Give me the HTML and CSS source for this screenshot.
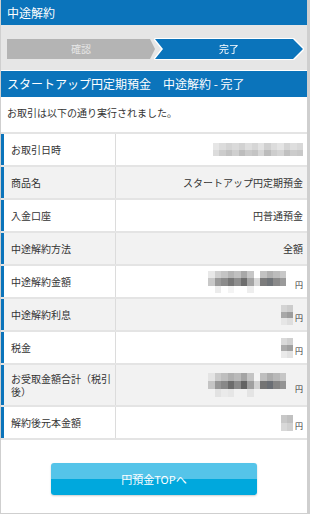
FILE: index.html
```html
<!DOCTYPE html>
<html lang="ja">
<head>
<meta charset="UTF-8">
<meta name="viewport" content="width=device-width, initial-scale=1.0">
<title>中途解約 - 完了</title>
<link rel="stylesheet" href="styles.css">
</head>
<body>

<div class="page">
  <div class="header">中途解約</div>

  <div class="steps">
    <div class="step done">確認</div>
    <div class="step-wrap"><div class="step current">完了</div></div>
  </div>

  <h1 class="title">スタートアップ円定期預金　中途解約 - 完了</h1>
  <p class="message">お取引は以下の通り実行されました。</p>

  <div class="table">
    <div class="row">
      <div class="label">お取引日時</div>
      <div class="value">
        <svg class="mosaic" width="90" height="13" viewBox="0 0 14 2" preserveAspectRatio="none" shape-rendering="crispEdges">
          <rect x="0" y="0" width="1" height="1" fill="#e6e6e6"/>
          <rect x="1" y="0" width="1" height="1" fill="#dcdcdc"/>
          <rect x="2" y="0" width="1" height="1" fill="#d4d4d4"/>
          <rect x="3" y="0" width="1" height="1" fill="#dadada"/>
          <rect x="4" y="0" width="1" height="1" fill="#d2d2d2"/>
          <rect x="5" y="0" width="1" height="1" fill="#dedede"/>
          <rect x="6" y="0" width="1" height="1" fill="#d6d6d6"/>
          <rect x="7" y="0" width="1" height="1" fill="#e2e2e2"/>
          <rect x="8" y="0" width="1" height="1" fill="#d0d0d0"/>
          <rect x="9" y="0" width="1" height="1" fill="#dcdcdc"/>
          <rect x="10" y="0" width="1" height="1" fill="#e4e4e4"/>
          <rect x="11" y="0" width="1" height="1" fill="#d4d4d4"/>
          <rect x="12" y="0" width="1" height="1" fill="#dedede"/>
          <rect x="13" y="0" width="1" height="1" fill="#d8d8d8"/>
          <rect x="0" y="1" width="1" height="1" fill="#dcdcdc"/>
          <rect x="1" y="1" width="1" height="1" fill="#cccccc"/>
          <rect x="2" y="1" width="1" height="1" fill="#c2c2c2"/>
          <rect x="3" y="1" width="1" height="1" fill="#cfcfcf"/>
          <rect x="4" y="1" width="1" height="1" fill="#bdbdbd"/>
          <rect x="5" y="1" width="1" height="1" fill="#cacaca"/>
          <rect x="6" y="1" width="1" height="1" fill="#c4c4c4"/>
          <rect x="7" y="1" width="1" height="1" fill="#d6d6d6"/>
          <rect x="8" y="1" width="1" height="1" fill="#bcbcbc"/>
          <rect x="9" y="1" width="1" height="1" fill="#cdcdcd"/>
          <rect x="10" y="1" width="1" height="1" fill="#d4d4d4"/>
          <rect x="11" y="1" width="1" height="1" fill="#c0c0c0"/>
          <rect x="12" y="1" width="1" height="1" fill="#cccccc"/>
          <rect x="13" y="1" width="1" height="1" fill="#c8c8c8"/>
        </svg>
      </div>
    </div>
    <div class="row">
      <div class="label">商品名</div>
      <div class="value">スタートアップ円定期預金</div>
    </div>
    <div class="row">
      <div class="label">入金口座</div>
      <div class="value">円普通預金</div>
    </div>
    <div class="row">
      <div class="label">中途解約方法</div>
      <div class="value">全額</div>
    </div>
    <div class="row">
      <div class="label">中途解約金額</div>
      <div class="value">
        <svg class="mosaic" width="85" height="22" viewBox="0 0 13 3" preserveAspectRatio="none" shape-rendering="crispEdges">
          <rect x="0" y="0" width="1" height="1" fill="#e8e8e8"/>
          <rect x="1" y="0" width="1" height="1" fill="#cfcfcf"/>
          <rect x="2" y="0" width="1" height="1" fill="#c4c4c4"/>
          <rect x="3" y="0" width="1" height="1" fill="#b4b4b4"/>
          <rect x="4" y="0" width="1" height="1" fill="#c0c0c0"/>
          <rect x="5" y="0" width="1" height="1" fill="#a8a8a8"/>
          <rect x="6" y="0" width="1" height="1" fill="#c6c6c6"/>
          <rect x="7" y="0" width="1" height="1" fill="#ffffff"/>
          <rect x="8" y="0" width="1" height="1" fill="#c2c2c2"/>
          <rect x="9" y="0" width="1" height="1" fill="#b0b0b0"/>
          <rect x="10" y="0" width="1" height="1" fill="#bcbcbc"/>
          <rect x="11" y="0" width="1" height="1" fill="#c8c8c8"/>
          <rect x="12" y="0" width="1" height="1" fill="#ffffff"/>
          <rect x="0" y="1" width="1" height="1" fill="#c8c8c8"/>
          <rect x="1" y="1" width="1" height="1" fill="#9a9a9a"/>
          <rect x="2" y="1" width="1" height="1" fill="#8c8c8c"/>
          <rect x="3" y="1" width="1" height="1" fill="#777777"/>
          <rect x="4" y="1" width="1" height="1" fill="#8e8e8e"/>
          <rect x="5" y="1" width="1" height="1" fill="#6e6e6e"/>
          <rect x="6" y="1" width="1" height="1" fill="#a4a4a4"/>
          <rect x="7" y="1" width="1" height="1" fill="#d8d8d8"/>
          <rect x="8" y="1" width="1" height="1" fill="#7c7c7c"/>
          <rect x="9" y="1" width="1" height="1" fill="#707478"/>
          <rect x="10" y="1" width="1" height="1" fill="#8a8a8a"/>
          <rect x="11" y="1" width="1" height="1" fill="#9a9a9a"/>
          <rect x="12" y="1" width="1" height="1" fill="#ffffff"/>
          <rect x="0" y="2" width="1" height="1" fill="#ffffff"/>
          <rect x="1" y="2" width="1" height="1" fill="#ececec"/>
          <rect x="2" y="2" width="1" height="1" fill="#ffffff"/>
          <rect x="3" y="2" width="1" height="1" fill="#f4f4f4"/>
          <rect x="4" y="2" width="1" height="1" fill="#ffffff"/>
          <rect x="5" y="2" width="1" height="1" fill="#ffffff"/>
          <rect x="6" y="2" width="1" height="1" fill="#eeeeee"/>
          <rect x="7" y="2" width="1" height="1" fill="#ffffff"/>
          <rect x="8" y="2" width="1" height="1" fill="#ffffff"/>
          <rect x="9" y="2" width="1" height="1" fill="#ffffff"/>
          <rect x="10" y="2" width="1" height="1" fill="#ffffff"/>
          <rect x="11" y="2" width="1" height="1" fill="#ffffff"/>
          <rect x="12" y="2" width="1" height="1" fill="#ffffff"/>
        </svg>
        <span class="yen">円</span>
      </div>
    </div>
    <div class="row">
      <div class="label">中途解約利息</div>
      <div class="value">
        <svg class="mosaic" width="12" height="20" viewBox="0 0 2 3" preserveAspectRatio="none" shape-rendering="crispEdges">
          <rect x="0" y="0" width="1" height="1" fill="#d4d4d4"/>
          <rect x="1" y="0" width="1" height="1" fill="#cccccc"/>
          <rect x="0" y="1" width="1" height="1" fill="#a8a8a8"/>
          <rect x="1" y="1" width="1" height="1" fill="#9c9c9c"/>
          <rect x="0" y="2" width="1" height="1" fill="#e6e6e6"/>
          <rect x="1" y="2" width="1" height="1" fill="#dedede"/>
        </svg>
        <span class="yen">円</span>
      </div>
    </div>
    <div class="row">
      <div class="label">税金</div>
      <div class="value">
        <svg class="mosaic" width="12" height="20" viewBox="0 0 2 3" preserveAspectRatio="none" shape-rendering="crispEdges">
          <rect x="0" y="0" width="1" height="1" fill="#dadada"/>
          <rect x="1" y="0" width="1" height="1" fill="#d0d0d0"/>
          <rect x="0" y="1" width="1" height="1" fill="#acacac"/>
          <rect x="1" y="1" width="1" height="1" fill="#a0a0a0"/>
          <rect x="0" y="2" width="1" height="1" fill="#eaeaea"/>
          <rect x="1" y="2" width="1" height="1" fill="#e2e2e2"/>
        </svg>
        <span class="yen">円</span>
      </div>
    </div>
    <div class="row">
      <div class="label">お受取金額合計（税引後）</div>
      <div class="value">
        <svg class="mosaic" width="85" height="24" viewBox="0 0 13 3" preserveAspectRatio="none" shape-rendering="crispEdges">
          <rect x="0" y="0" width="1" height="1" fill="#e4e4e4"/>
          <rect x="1" y="0" width="1" height="1" fill="#cacaca"/>
          <rect x="2" y="0" width="1" height="1" fill="#bebebe"/>
          <rect x="3" y="0" width="1" height="1" fill="#b0b0b0"/>
          <rect x="4" y="0" width="1" height="1" fill="#bababa"/>
          <rect x="5" y="0" width="1" height="1" fill="#a4a4a4"/>
          <rect x="6" y="0" width="1" height="1" fill="#c4c4c4"/>
          <rect x="7" y="0" width="1" height="1" fill="#f4f4f4"/>
          <rect x="8" y="0" width="1" height="1" fill="#bebebe"/>
          <rect x="9" y="0" width="1" height="1" fill="#acacac"/>
          <rect x="10" y="0" width="1" height="1" fill="#b8b8b8"/>
          <rect x="11" y="0" width="1" height="1" fill="#c6c6c6"/>
          <rect x="12" y="0" width="1" height="1" fill="#f2f2f2"/>
          <rect x="0" y="1" width="1" height="1" fill="#c4c4c4"/>
          <rect x="1" y="1" width="1" height="1" fill="#969696"/>
          <rect x="2" y="1" width="1" height="1" fill="#888888"/>
          <rect x="3" y="1" width="1" height="1" fill="#6c6c6c"/>
          <rect x="4" y="1" width="1" height="1" fill="#8a8a8a"/>
          <rect x="5" y="1" width="1" height="1" fill="#646464"/>
          <rect x="6" y="1" width="1" height="1" fill="#a0a0a0"/>
          <rect x="7" y="1" width="1" height="1" fill="#d2d2d2"/>
          <rect x="8" y="1" width="1" height="1" fill="#747474"/>
          <rect x="9" y="1" width="1" height="1" fill="#6a6e74"/>
          <rect x="10" y="1" width="1" height="1" fill="#858585"/>
          <rect x="11" y="1" width="1" height="1" fill="#949494"/>
          <rect x="12" y="1" width="1" height="1" fill="#f2f2f2"/>
          <rect x="0" y="2" width="1" height="1" fill="#f2f2f2"/>
          <rect x="1" y="2" width="1" height="1" fill="#e2e2e2"/>
          <rect x="2" y="2" width="1" height="1" fill="#eaeaea"/>
          <rect x="3" y="2" width="1" height="1" fill="#e6e6e6"/>
          <rect x="4" y="2" width="1" height="1" fill="#f2f2f2"/>
          <rect x="5" y="2" width="1" height="1" fill="#f2f2f2"/>
          <rect x="6" y="2" width="1" height="1" fill="#e4e4e4"/>
          <rect x="7" y="2" width="1" height="1" fill="#f2f2f2"/>
          <rect x="8" y="2" width="1" height="1" fill="#f2f2f2"/>
          <rect x="9" y="2" width="1" height="1" fill="#f2f2f2"/>
          <rect x="10" y="2" width="1" height="1" fill="#f2f2f2"/>
          <rect x="11" y="2" width="1" height="1" fill="#f2f2f2"/>
          <rect x="12" y="2" width="1" height="1" fill="#f2f2f2"/>
        </svg>
        <span class="yen">円</span>
      </div>
    </div>
    <div class="row">
      <div class="label">解約後元本金額</div>
      <div class="value">
        <svg class="mosaic" width="12" height="16" viewBox="0 0 2 2" preserveAspectRatio="none" shape-rendering="crispEdges">
          <rect x="0" y="0" width="1" height="1" fill="#c8c8c8"/>
          <rect x="1" y="0" width="1" height="1" fill="#c0c0c0"/>
          <rect x="0" y="1" width="1" height="1" fill="#d8d8d8"/>
          <rect x="1" y="1" width="1" height="1" fill="#d0d0d0"/>
        </svg>
        <span class="yen">円</span>
      </div>
    </div>
  </div>

  <div class="actions">
    <button class="btn">円預金TOPへ</button>
  </div>
</div>

</body>
</html>
```

FILE: styles.css
```css
* {
  box-sizing: border-box;
}

body {
  margin: 0;
  background: #fff;
  font-family: "Noto Sans CJK JP", "Noto Sans", sans-serif;
  color: #333;
}

.page {
  width: 310px;
  height: 514px;
  border: 1px solid #cfcfcf;
  border-top: none;
  border-right-width: 3px;
}

.header {
  height: 25px;
  line-height: 25px;
  padding-left: 6px;
  background: #0b74bb;
  color: #fff;
  font-size: 12px;
}

.steps {
  display: flex;
  height: 45px;
  padding: 14px 4px 0 6px;
  background: #e6e6e6;
}

.step {
  height: 20px;
  line-height: 20px;
  font-size: 10px;
  text-align: center;
}

.step.done {
  width: 148px;
  background: #b4b4b4;
  color: #e6e6e6;
  clip-path: polygon(0 0, calc(100% - 5px) 0, 100% 50%, calc(100% - 5px) 100%, 0 100%);
}

.step-wrap {
  flex: 1;
  filter: drop-shadow(1px 0 0 #fff) drop-shadow(-1px 0 0 #fff) drop-shadow(0 1px 0 #fff) drop-shadow(0 -1px 0 #fff);
}

.step.current {
  background: #0b74bb;
  color: #fff;
  clip-path: polygon(0 0, calc(100% - 10px) 0, 100% 50%, calc(100% - 10px) 100%, 0 100%, 8px 50%);
}

.title {
  margin: 1px 0 0;
  height: 26px;
  line-height: 26px;
  padding-left: 6px;
  background: #0b74bb;
  color: #fff;
  font-size: 12px;
  font-weight: normal;
  white-space: nowrap;
}

.message {
  margin: 0;
  height: 35px;
  padding: 9px 6px 0;
  font-size: 10px;
  line-height: 14px;
}

.table {
  border-top: 2px solid #e4e4e4;
}

.row {
  display: grid;
  grid-template-columns: 115px 1fr;
  min-height: 33px;
  border-bottom: 2px solid #e4e4e4;
  font-size: 10px;
  line-height: 13px;
}

.row:nth-child(even) {
  background: #f2f2f2;
}

.label {
  display: flex;
  align-items: center;
  padding: 7px 4px 7px 7px;
  border-left: 3px solid #0b74bb;
  border-right: 1px solid #dcdcdc;
}

.value {
  display: flex;
  align-items: center;
  justify-content: flex-end;
  gap: 2px;
  padding: 0 4px 0 6px;
}

.mosaic {
  display: block;
}

.yen {
  font-size: 8px;
  align-self: center;
  margin-top: 6px;
}

.actions {
  display: flex;
  justify-content: center;
  padding-top: 23px;
}

.btn {
  width: 206px;
  height: 32px;
  border: none;
  border-radius: 3px;
  background: linear-gradient(#55c4e9 0, #55c4e9 50%, #00a8dd 50%, #00a8dd 100%);
  color: #fff;
  font-family: inherit;
  font-size: 11px;
  box-shadow: 0 1px 2px rgba(0, 0, 0, 0.2);
  cursor: pointer;
}
```
